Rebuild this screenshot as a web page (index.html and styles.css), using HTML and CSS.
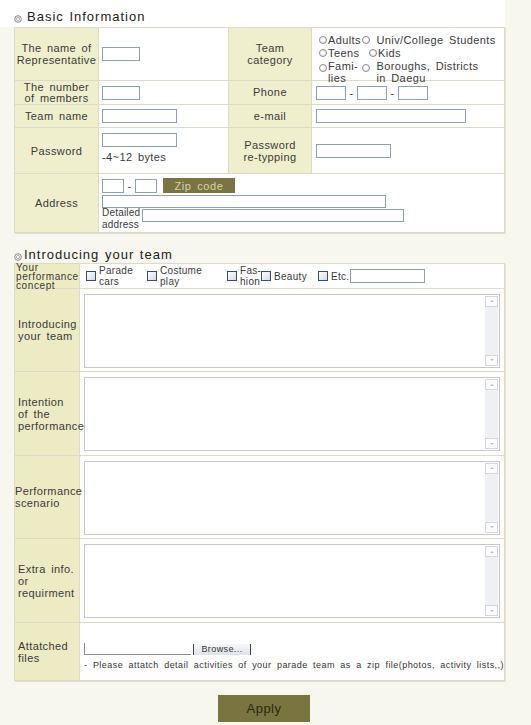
FILE: index.html
```html
<!DOCTYPE html>
<html lang="en">
<head>
    <meta charset="UTF-8">
    <title>Team Application</title>
    <link rel="stylesheet" href="styles.css">
</head>
<body>
<div class="page">
    <h3 class="sec-title first"><svg class="bullet" width="8" height="8" viewBox="0 0 8 8"><circle cx="4" cy="4" r="3.3" fill="#fff" stroke="#777" stroke-width="0.9"/><circle cx="4" cy="4" r="1.6" fill="none" stroke="#999" stroke-width="0.8"/></svg>Basic Information</h3>

    <!-- Basic information -->
    <table class="form-table basic">
        <colgroup>
            <col class="c-lab1">
            <col class="c-val1">
            <col class="c-lab2">
            <col>
        </colgroup>
        <tr class="h53">
            <th>The name of<br>Representative</th>
            <td class="val1"><input type="text" class="w38"></td>
            <th>Team<br>category</th>
            <td class="val2 cats">
                <div class="cat-row">
                    <label class="opt w43"><span class="radio"></span>Adults</label>
                    <label class="opt"><span class="radio"></span>&nbsp;Univ/College Students</label>
                </div>
                <div class="cat-row">
                    <label class="opt w50"><span class="radio"></span>Teens</label>
                    <label class="opt"><span class="radio"></span>Kids</label>
                </div>
                <div class="cat-row last">
                    <label class="opt w43 wrap"><span class="radio"></span><span>Fami-<br>lies</span></label>
                    <label class="opt wrap"><span class="radio"></span><span>&nbsp;Boroughs, Districts<br>&nbsp;in Daegu</span></label>
                </div>
            </td>
        </tr>
        <tr class="h24">
            <th>The number<br>of members</th>
            <td class="val1"><input type="text" class="w38"></td>
            <th>Phone</th>
            <td class="val2">
                <input type="text" class="w30"><span class="dash">-</span><input type="text" class="w30"><span class="dash">-</span><input type="text" class="w30">
            </td>
        </tr>
        <tr class="h23">
            <th>Team name</th>
            <td class="val1"><input type="text" class="w75"></td>
            <th>e-mail</th>
            <td class="val2"><input type="text" class="w150"></td>
        </tr>
        <tr class="h46">
            <th>Password</th>
            <td class="val1 pw">
                <input type="password" class="w75">
                <div class="hint">-4~12 bytes</div>
            </td>
            <th>Password<br>re-typping</th>
            <td class="val2"><input type="password" class="w75"></td>
        </tr>
        <tr class="h59">
            <th>Address</th>
            <td class="val1 addr" colspan="3">
                <div class="zip-line">
                    <input type="text" class="w22"><span class="dash">-</span><input type="text" class="w22">
                    <button type="button" class="zip-btn">Zip code</button>
                </div>
                <input type="text" class="w284">
                <div class="detail-line">
                    <span class="detail-lab">Detailed<br>address</span>
                    <input type="text" class="w262">
                </div>
            </td>
        </tr>
    </table>

    <h3 class="sec-title second"><svg class="bullet" width="8" height="8" viewBox="0 0 8 8"><circle cx="4" cy="4" r="3.3" fill="#fff" stroke="#777" stroke-width="0.9"/><circle cx="4" cy="4" r="1.6" fill="none" stroke="#999" stroke-width="0.8"/></svg>Introducing your team</h3>

    <!-- Team introduction -->
    <table class="form-table intro">
        <colgroup>
            <col class="c-side">
            <col>
        </colgroup>
        <tr class="h25">
            <th class="side concept"><div class="concept-lab">Your<br>performance<br>concept</div></th>
            <td>
                <div class="concepts">
                    <label class="chk w61"><span class="box"></span><span>Parade<br>cars</span></label>
                    <label class="chk w80"><span class="box"></span><span>Costume<br>play</span></label>
                    <label class="chk w34"><span class="box"></span><span>Fas-<br>hion</span></label>
                    <label class="chk w57"><span class="box"></span><span class="one">Beauty</span></label>
                    <label class="chk w32"><span class="box"></span><span class="one">Etc.</span></label>
                    <input type="text" class="w75">
                </div>
            </td>
        </tr>
        <tr class="h83">
            <th class="side">Introducing<br>your team</th>
            <td class="area-cell">
                <div class="area"><textarea></textarea><div class="sbar"><span class="arr up"></span><span class="arr down"></span></div></div>
            </td>
        </tr>
        <tr class="h84">
            <th class="side">Intention<br>of the<br>performance</th>
            <td class="area-cell">
                <div class="area"><textarea></textarea><div class="sbar"><span class="arr up"></span><span class="arr down"></span></div></div>
            </td>
        </tr>
        <tr class="h83">
            <th class="side flush">Performance<br>scenario</th>
            <td class="area-cell">
                <div class="area"><textarea></textarea><div class="sbar"><span class="arr up"></span><span class="arr down"></span></div></div>
            </td>
        </tr>
        <tr class="h84">
            <th class="side">Extra info.<br>or<br>requirment</th>
            <td class="area-cell">
                <div class="area"><textarea></textarea><div class="sbar"><span class="arr up"></span><span class="arr down"></span></div></div>
            </td>
        </tr>
        <tr class="h58">
            <th class="side">Attatched<br>files</th>
            <td class="files">
                <div class="file-line">
                    <span class="file-path"></span>
                    <button type="button" class="browse">Browse...</button>
                </div>
                <div class="file-note">- Please attatch detail activities of your parade team as a zip file(photos, activity lists,,)</div>
            </td>
        </tr>
    </table>

    <div class="actions">
        <button type="submit" class="apply">Apply</button>
    </div>
</div>
</body>
</html>
```

FILE: styles.css
```css
body {
    margin: 0;
    background-color: #f8f7ef;
    font-family: "Liberation Sans", Arial, sans-serif;
    font-size: 11px;
    color: #3a3a3a;
    letter-spacing: 0.4px;
    word-spacing: 2px;
}

.page {
    width: 491px;
    margin-left: 14px;
}

/* Section titles */
.sec-title {
    margin: 0;
    font-size: 13px;
    font-weight: normal;
    letter-spacing: 1px;
    word-spacing: 1px;
    color: #222;
    display: flex;
    align-items: flex-end;
}

.sec-title.first {
    height: 27px;
    padding-bottom: 3px;
    box-sizing: border-box;
    background-color: #fff;
    margin-left: -14px;
    padding-left: 14px;
    width: 505px;
}

.sec-title.second {
    height: 30px;
    padding-bottom: 1px;
    box-sizing: border-box;
}

.bullet {
    margin-right: 5px;
    margin-bottom: 1px;
}

.sec-title.second .bullet {
    margin-right: 2px;
}

/* Tables */
.form-table {
    width: 491px;
    border-collapse: collapse;
    table-layout: fixed;
    background-color: #fff;
    border: 1px solid #d2d1bb;
    box-shadow: 1px 1px 0 #e4e3d3;
}

th, td {
    border: 1px solid #dcdbc8;
    padding: 0;
    vertical-align: middle;
}

th {
    font-weight: normal;
    background-color: #f0efcd;
    color: #3a3a3a;
    line-height: 12px;
}

.h23 { height: 23px; }
.h24 { height: 24px; }
.h25 { height: 25px; }
.h46 { height: 46px; }
.h53 { height: 53px; }
.h58 { height: 58px; }
.h59 { height: 59px; }
.h83 { height: 83px; }
.h84 { height: 84px; }

.h24 th { line-height: 11px; }

.c-lab1 { width: 84px; }
.c-val1 { width: 130px; }
.c-lab2 { width: 83px; }
.c-side { width: 65px; }

.val1 { padding-left: 3px; }
.val2 { padding-left: 4px; }

input[type="text"],
input[type="password"] {
    height: 14px;
    box-sizing: border-box;
    border: 1px solid #8c9fb4;
    background: #fff;
    padding: 0;
    margin: 0;
    vertical-align: middle;
}

.w22 { width: 22px; }
.w30 { width: 30px; }
.w38 { width: 38px; }
.w75 { width: 75px; }
.w150 { width: 150px; }
.w262 { width: 262px; }
.w284 { width: 284px; }

.dash {
    display: inline-block;
    width: 11px;
    text-align: center;
    vertical-align: middle;
}

/* Team category radios */
.cats {
    vertical-align: top;
    padding-top: 6px;
}

.cat-row {
    display: flex;
    line-height: 12px;
    height: 13px;
    margin-left: 3px;
}

.cat-row.last {
    height: 18px;
}

.opt {
    display: flex;
    align-items: flex-start;
    white-space: nowrap;
}

.w43 { width: 43px; }
.w50 { width: 50px; }

.radio {
    width: 8px;
    height: 8px;
    border-radius: 50%;
    border: 1px solid #8a8a8a;
    background: radial-gradient(circle at 40% 40%, #fff 30%, #e2e2e2 100%);
    box-sizing: border-box;
    margin: 2px 1px 0 0;
    flex: none;
}

.wrap .radio { margin-top: 4px; }

/* Password */
.pw {
    padding-top: 4px;
    vertical-align: top;
}

.pw input { display: block; margin-top: 1px; }

.hint {
    margin-top: 4px;
    line-height: 12px;
}

/* Address */
.addr {
    vertical-align: top;
    padding-top: 4px;
}

.zip-line {
    display: flex;
    align-items: center;
    height: 15px;
}

.zip-btn {
    margin-left: 6px;
    width: 72px;
    height: 15px;
    padding: 0;
    border: none;
    background-color: #7a7441;
    color: #d8d2a6;
    font-family: "Liberation Sans", Arial, sans-serif;
    font-size: 11px;
    letter-spacing: 0.6px;
    word-spacing: 2px;
}

.addr > input {
    display: block;
    margin-top: 2px;
    height: 13px;
}

.detail-line {
    display: flex;
    align-items: flex-start;
    margin-top: -1px;
    height: 22px;
}

.detail-lab {
    font-size: 10px;
    line-height: 12px;
    letter-spacing: 0.2px;
    width: 40px;
}

.detail-line input {
    margin-top: 2px;
    height: 13px;
}

/* Introduction table */
.intro .side {
    background-color: #ecebc3;
    text-align: left;
    padding-left: 3px;
    white-space: nowrap;
}

.intro .side.flush { padding-left: 0; }

.intro .concept {
    padding-left: 1px;
    vertical-align: top;
}

.concept-lab {
    height: 25px;
    margin-top: -1px;
    font-size: 10px;
    line-height: 9px;
    letter-spacing: 0.6px;
}

.concepts {
    display: flex;
    align-items: center;
    padding-left: 6px;
    white-space: nowrap;
}

.chk {
    display: flex;
    align-items: center;
    font-size: 10px;
    line-height: 11px;
    letter-spacing: 0.3px;
    flex: none;
}

.chk .one { padding-top: 1px; }

.w32 { width: 32px; }
.w34 { width: 34px; }
.w57 { width: 57px; }
.w61 { width: 61px; }
.w80 { width: 80px; }

.box {
    width: 10px;
    height: 10px;
    box-sizing: border-box;
    border: 1px solid #34506c;
    background: linear-gradient(135deg, #fff 0%, #d3dbe6 100%);
    margin-right: 3px;
    flex: none;
}

.area-cell { padding: 0 4px; }

.area {
    display: flex;
    height: 74px;
    border: 1px solid #c8c8c8;
    background: #fff;
    box-sizing: border-box;
    margin-top: 1px;
}

.area textarea {
    flex: 1;
    border: none;
    resize: none;
    outline: none;
    padding: 0;
    margin: 0;
}

.sbar {
    width: 13px;
    margin: 1px 1px 1px 0;
    background-color: #eef0f3;
    display: flex;
    flex-direction: column;
    justify-content: space-between;
}

.arr {
    height: 11px;
    border: 1px solid #d4d6da;
    background-color: #fbfbfc;
    box-sizing: border-box;
    display: flex;
    align-items: center;
    justify-content: center;
}

.arr::after {
    content: "";
    border-left: 2px solid transparent;
    border-right: 2px solid transparent;
}

.arr.up::after { border-bottom: 2px solid #b9bcc2; }
.arr.down::after { border-top: 2px solid #b9bcc2; }

/* Attachments */
.files {
    padding-left: 4px;
    padding-top: 8px;
}

.file-line {
    display: flex;
    align-items: flex-end;
    height: 13px;
}

.file-path {
    width: 106px;
    height: 11px;
    border-left: 1px solid #8c8c8c;
    border-bottom: 1px solid #8c8c8c;
}

.browse {
    margin-left: 2px;
    height: 11px;
    padding: 0 5px;
    border: none;
    border-left: 1px solid #444;
    border-right: 1px solid #444;
    background: linear-gradient(#f6f7f9, #dfe3ea);
    font-family: "Liberation Sans", Arial, sans-serif;
    font-size: 9px;
    line-height: 10px;
    letter-spacing: 0.4px;
    color: #333;
    width: 58px;
}

.file-note {
    margin-top: 5px;
    font-size: 9px;
    letter-spacing: 0.45px;
    word-spacing: 2.5px;
    white-space: nowrap;
    color: #333;
}

/* Apply button */
.actions {
    display: flex;
    padding-left: 204px;
    padding-top: 14px;
}

.apply {
    width: 92px;
    height: 27px;
    border: none;
    background-color: #7a7441;
    color: #2b2914;
    font-family: "Liberation Sans", Arial, sans-serif;
    font-size: 13px;
    letter-spacing: 0.5px;
    padding: 0;
}
```
